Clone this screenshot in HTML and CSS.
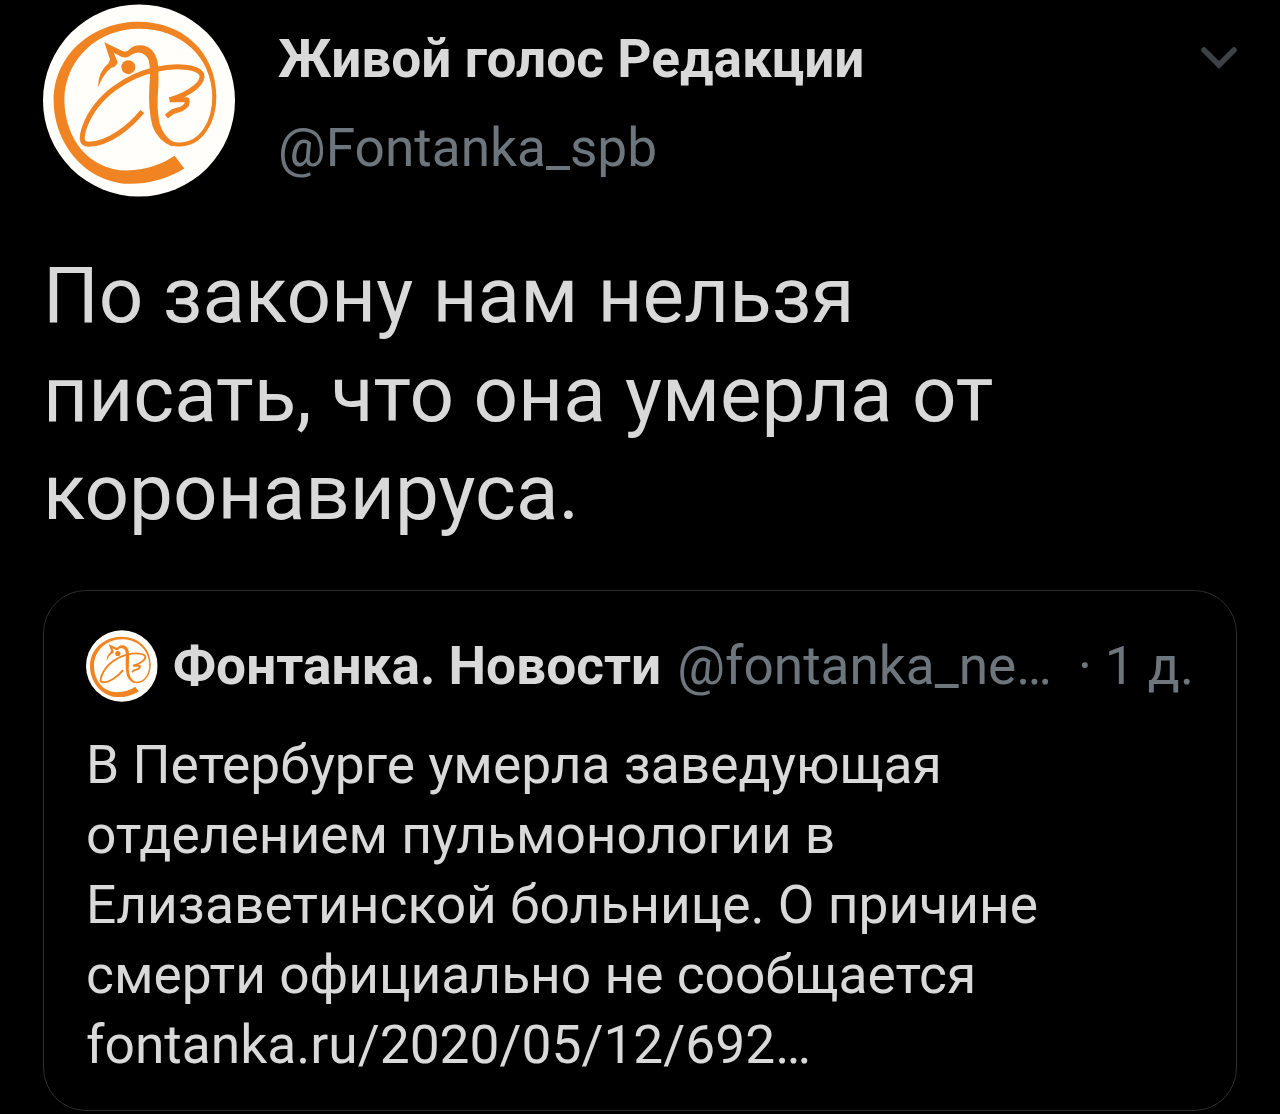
FILE: index.html
```html
<!DOCTYPE html>
<html lang="ru">
<head>
  <meta charset="UTF-8" />
  <meta name="viewport" content="width=device-width, initial-scale=1.0" />
  <title>Живой голос Редакции</title>
  <link rel="stylesheet" href="styles.css">
</head>
<body>
  <svg class="symbols">
    <symbol id="bird" viewBox="38 13 576 576">
      <circle cx="326" cy="301" r="288" fill="#fffefa" />
      <g fill="#f08322">
        <path d="M462 505C410 537 350 552 295 551C165 546 70 430 70 300C72 160 190 65 325 65C455 65 558 155 558 290L546 290C545 170 450 85 325 86C200 86 103 180 102 300C104 415 175 510 290 511C345 510 395 493 433 467Z" />
        <path d="M222 126L278 153Q292 157 300 145Q315 132 340 136Q370 142 381 180Q386 210 384 260Q378 330 388 370Q400 410 430 426L425 439Q385 424 367 380Q353 330 357 260Q362 210 355 180Q348 160 325 157Q305 160 297 168Q282 177 266 166L250 158L262 186Q258 200 243 203Q220 220 203 262Q203 215 234 190L239 178Z" />
        <circle cx="294" cy="201" r="21" />
      </g>
      <g fill="none" stroke="#f08322" stroke-linejoin="round">
        <path stroke-width="12" d="M552 285C553 370 510 433 447 433Q435 433 424 430" />
        <path stroke-width="15" d="M336 334C300 378 235 432 175 432C150 432 153 410 163 380C200 280 300 225 375 208C440 193 502 200 514 222C522 245 485 280 418 299" />
        <path stroke-width="15" d="M418 299L470 299Q475 315 454 326L428 334L408 349" />
      </g>
    </symbol>
  </svg>

  <div class="tweet">
    <div class="header">
      <svg class="avatar"><use href="#bird" /></svg>
      <div class="author">
        <div class="name">Живой голос Редакции</div>
        <div class="handle">@Fontanka_spb</div>
      </div>
      <svg class="chevron" viewBox="0 0 36 24">
        <path d="M3 3L18 18L33 3" fill="none" stroke="#3d4247" stroke-width="5.5" stroke-linecap="round" />
      </svg>
    </div>

    <p class="text">По закону нам нельзя<br>писать, что она умерла от<br>коронавируса.</p>

    <div class="quote">
      <div class="quote-header">
        <svg class="quote-avatar"><use href="#bird" /></svg>
        <span class="quote-name">Фонтанка. Новости</span>
        <span class="quote-handle">@fontanka_ne…</span>
        <span class="quote-dot">·</span>
        <span class="quote-time">1 д.</span>
      </div>
      <p class="quote-text">В Петербурге умерла заведующая<br>отделением пульмонологии в<br>Елизаветинской больнице. О причине<br>смерти официально не сообщается<br>fontanka.ru/2020/05/12/692…</p>
    </div>
  </div>
</body>
</html>
```
FILE: styles.css
```css
* {
  box-sizing: border-box;
}
body {
  margin: 0;
  background: #000;
  color: #d9d9d9;
  font-family: Roboto, sans-serif;
  overflow: hidden;
}
p {
  margin: 0;
}
.symbols {
  display: none;
}
.tweet {
  padding: 4px 43px 0;
  white-space: nowrap;
}
.header {
  display: flex;
  align-items: flex-start;
  height: 193px;
}
.avatar {
  width: 192px;
  height: 193px;
}
.author {
  flex: 1;
  padding: 23px 0 0 43px;
  font-size: 53.2px;
  line-height: 64px;
}
.name {
  font-weight: bold;
}
.handle {
  margin-top: 25px;
  color: #6e767d;
}
.chevron {
  width: 36px;
  height: 24px;
  margin-top: 43px;
}
.text {
  height: 296px;
  margin-top: 49px;
  font-size: 78.2px;
  line-height: 98.5px;
}
.quote {
  height: 521px;
  margin-top: 48px;
  padding: 38px 42px 0;
  border: 1px solid #2b2d2f;
  border-radius: 43px;
}
.quote-header {
  display: flex;
  align-items: center;
  height: 74px;
  font-size: 53.2px;
  color: #6e767d;
}
.quote-avatar {
  width: 72px;
  height: 72px;
  margin-right: 15px;
}
.quote-name {
  margin-right: 16px;
  font-weight: bold;
  color: #d9d9d9;
}
.quote-dot {
  margin-left: 26px;
}
.quote-time {
  margin-left: 13px;
}
.quote-text {
  margin-top: 27px;
  font-size: 53.3px;
  line-height: 70px;
}
```
